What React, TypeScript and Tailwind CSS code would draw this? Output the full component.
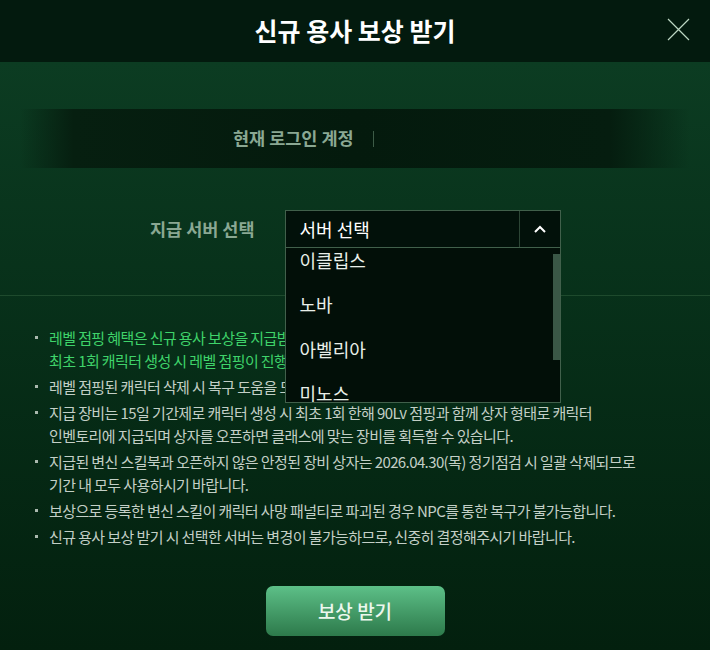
import React from 'react';

const servers = ['이클립스', '노바', '아벨리아', '미노스', '오를리', '가르디안'];

const notes: { lines: string[]; highlight?: boolean }[] = [
  {
    lines: ['레벨 점핑 혜택은 신규 용사 보상을 지급받은 서버에서', '최초 1회 캐릭터 생성 시 레벨 점핑이 진행됩니다.'],
    highlight: true,
  },
  { lines: ['레벨 점핑된 캐릭터 삭제 시 복구 도움을 드릴 수 없습니다.'] },
  {
    lines: [
      '지급 장비는 15일 기간제로 캐릭터 생성 시 최초 1회 한해 90Lv 점핑과 함께 상자 형태로 캐릭터',
      '인벤토리에 지급되며 상자를 오픈하면 클래스에 맞는 장비를 획득할 수 있습니다.',
    ],
  },
  {
    lines: [
      '지급된 변신 스킬북과 오픈하지 않은 안정된 장비 상자는 2026.04.30(목) 정기점검 시 일괄 삭제되므로',
      '기간 내 모두 사용하시기 바랍니다.',
    ],
  },
  { lines: ['보상으로 등록한 변신 스킬이 캐릭터 사망 패널티로 파괴된 경우 NPC를 통한 복구가 불가능합니다.'] },
  { lines: ['신규 용사 보상 받기 시 선택한 서버는 변경이 불가능하므로, 신중히 결정해주시기 바랍니다.'] },
];

export default function App() {
  return (
    <div className="flex h-[650px] w-[710px] flex-col overflow-hidden font-['Noto_Sans_CJK_KR','Noto_Sans',sans-serif]">
      {/* Header */}
      <div className="relative flex h-[62px] shrink-0 items-center justify-center bg-[#031a0e]">
        <h1 className="text-[25px] font-bold text-white">신규 용사 보상 받기</h1>
        <button className="absolute right-[20px] top-[18px] h-[23px] w-[23px] text-[#bcd6c2]">
          <svg viewBox="0 0 23 23" className="h-full w-full" fill="none" stroke="currentColor" strokeWidth="1.2">
            <path d="M1 1L22 22M22 1L1 22" />
          </svg>
        </button>
      </div>

      {/* Body */}
      <div className="flex flex-1 flex-col bg-gradient-to-b from-[#0c3c22] to-[#03200e]">
        {/* Current account */}
        <div className="mx-[20px] mt-[47px] flex h-[59px] items-center bg-[linear-gradient(90deg,transparent,#061f10_8%,#041a0d_50%,#051d0f_88%,transparent)] pl-[213px]">
          <span className="text-[17.5px] font-bold text-[#8aa893]">현재 로그인 계정</span>
          <span className="ml-[19px] h-[16px] w-px bg-[#3d5c47]" />
        </div>

        {/* Server select */}
        <div className="mt-[42px] flex items-center gap-[30px] pl-[150px]">
          <span className="text-[17.5px] font-bold text-[#8aa893]">지급 서버 선택</span>
          <div className="relative w-[276px]">
            <div className="flex h-[38px] items-center border border-[#41604b] bg-[#02110a]">
              <span className="flex-1 pl-[14px] text-[18px] text-white">서버 선택</span>
              <span className="flex h-full w-[41px] items-center justify-center border-l border-[#2c4535]">
                <svg viewBox="0 0 12 8" className="h-[8px] w-[12px]" fill="none" stroke="white" strokeWidth="2">
                  <path d="M1 7L6 2L11 7" />
                </svg>
              </span>
            </div>
            {/* Open list */}
            <div className="absolute left-0 top-[38px] z-10 h-[155px] w-[276px] overflow-hidden border-x border-b border-[#41604b] bg-[#020f08]">
              <div className="-mt-[10px] pr-[10px]">
                {servers.map((s) => (
                  <div key={s} className="flex h-[44.5px] items-center pl-[14px] text-[18px] text-[#e9efe9]">
                    {s}
                  </div>
                ))}
              </div>
              <div className="absolute right-0 top-[6px] h-[106px] w-[7px] bg-[#3a5746]" />
            </div>
          </div>
        </div>

        {/* Divider */}
        <div className="mt-[47px] h-px bg-[#1e4a2d]" />

        {/* Notes */}
        <ul className="mt-[30px] flex flex-col gap-[3px] pl-[35px] text-[15px] leading-[23px] tracking-[-0.6px]">
          {notes.map((n, i) => (
            <li key={i} className={`flex whitespace-nowrap ${n.highlight ? 'text-[#3fd36a]' : 'text-[#c3cfc6]'}`}>
              <span className="flex h-[23px] w-[14px] shrink-0 items-center">
                <span className="h-[3px] w-[3px] bg-[#aab8ae]" />
              </span>
              <span>
                {n.lines.map((l, j) => (
                  <span key={j} className="block">
                    {l}
                  </span>
                ))}
              </span>
            </li>
          ))}
        </ul>

        {/* Submit */}
        <div className="mt-auto mb-[14px] flex justify-center">
          <button className="h-[50px] w-[179px] rounded-[7px] bg-gradient-to-b from-[#5dc088] to-[#2d7a4b] text-[19px] font-medium text-[#ecf7ee]">
            보상 받기
          </button>
        </div>
      </div>
    </div>
  );
}
